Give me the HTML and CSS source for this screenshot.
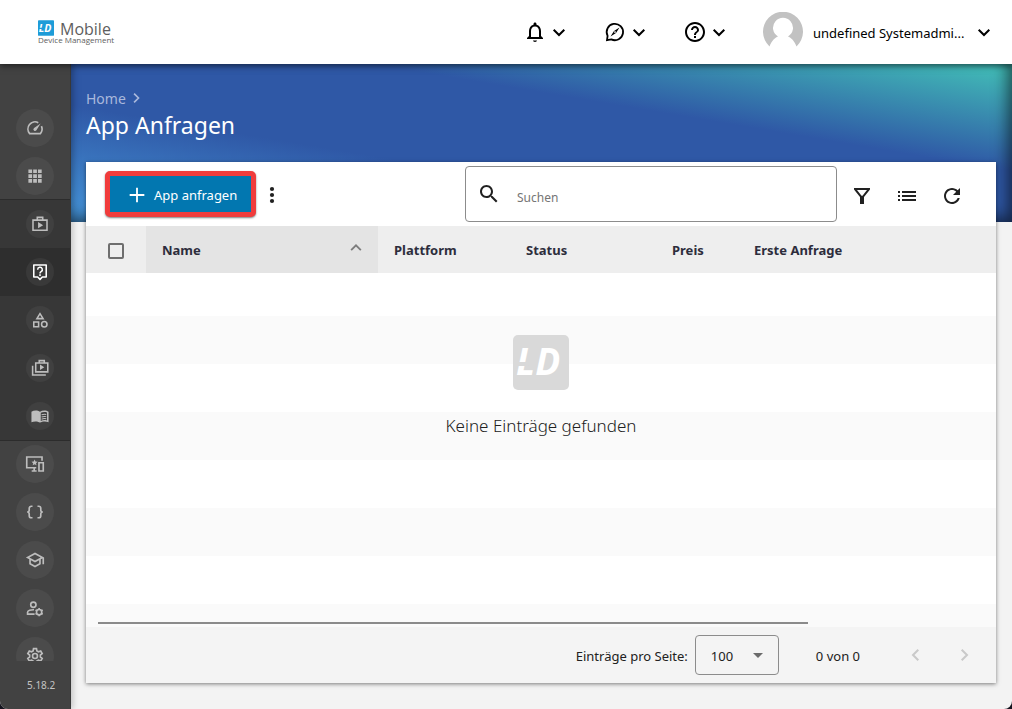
FILE: index.html
```html
<!DOCTYPE html>
<html lang="de">
<head>
<meta charset="utf-8">
<title>App Anfragen</title>
<link rel="stylesheet" href="styles.css">
</head>
<body>
<svg class="sprite" aria-hidden="true">
  <symbol id="chev" viewBox="0 0 24 24"><path d="M6.700 9.700 12 15l5.300-5.300" fill="none" stroke="currentColor" stroke-width="2"/></symbol>
</svg>
<div class="app">
  <header class="topbar">
    <a class="logo" href="#">
      <span class="logo-row"><svg class="logo-mark" viewBox="0 0 56 55"><rect width="56" height="55" rx="3"/><text x="3" y="41" class="ld-text">LD</text><path d="M2 27h14l-1 4H2z"/></svg><span class="logo-name">Mobile</span></span>
      <span class="logo-sub">Device Management</span>
    </a>
    <div class="top-actions">
      <button class="menu" aria-label="Benachrichtigungen">
        <svg class="i24" viewBox="0 0 24 24"><path d="M12 22c1.100 0 2-.9 2-1.500h-4c0 .6.890 1.500 2 1.500zm6-6v-5c0-3.070-1.640-5.640-4.500-6.320V4c0-.83-.67-1.500-1.500-1.500s-1.500.67-1.500 1.500v.68C7.630 5.360 6 7.920 6 11v5l-2 2v1h16v-1l-2-2zm-2 1H8v-6c0-2.480 1.510-4.500 4-4.500s4 2.020 4 4.500v6z"/></svg>
        <svg class="i24"><use href="#chev"/></svg>
      </button>
      <button class="menu" aria-label="Entdecken">
        <svg class="i24" viewBox="0 0 24 24"><path d="M4.600 15.800A8.200 8.200 0 1 1 8.300 19.400L4 20.200z" fill="none" stroke="currentColor" stroke-width="1.800"/><path d="m16.500 7.500-3.500 5.500-5.500 3.500 3.500-5.500zM12 11.200a.8.8 0 1 0 .01 0z" fill-rule="evenodd"/></svg>
        <svg class="i24"><use href="#chev"/></svg>
      </button>
      <button class="menu" aria-label="Hilfe">
        <svg class="i24" viewBox="0 0 24 24"><path d="M11 18h2v-2h-2v2zm1-16C6.480 2 2 6.480 2 12s4.480 10 10 10 10-4.480 10-10S17.520 2 12 2zm0 18c-4.410 0-8-3.590-8-8s3.590-8 8-8 8 3.590 8 8-3.590 8-8 8zm0-14c-2.210 0-4 1.790-4 4h2c0-1.100.9-2 2-2s2 .9 2 2c0 2-3 1.750-3 5h2c0-2.250 3-2.500 3-5 0-2.210-1.790-4-4-4z"/></svg>
        <svg class="i24"><use href="#chev"/></svg>
      </button>
      <button class="user">
        <svg class="avatar" viewBox="0 0 40 40"><path d="M6.500 34.500A20 20 0 1 1 33.500 34.500C31.500 29 28 25.500 25 24.500A10 10 0 1 0 15 24.500C12 25.500 8.500 29 6.500 34.500z"/></svg>
        <span class="user-name">undefined Systemadmi...</span>
        <svg class="i24"><use href="#chev"/></svg>
      </button>
    </div>
  </header>
  <div class="shell">
    <aside class="sidebar">
      <nav class="nav">
        <a class="item" href="#" aria-label="Dashboard"><svg class="dot" viewBox="-11 -11 46 46"><path d="M16 5.600A8.600 8.600 0 0 0 5.500 18.800H18.500A8.600 8.600 0 0 0 19.800 9.800" fill="none" stroke="currentColor" stroke-width="2"/><path d="M18.800 6.700 13.700 14.700a2 2 0 1 1-2.800-2.800z"/></svg></a>
        <a class="item" href="#" aria-label="Apps"><svg class="dot" viewBox="-11 -11 46 46"><path d="M4 4h4.500v4.500H4zM9.800 4h4.500v4.500H9.800zM15.600 4h4.500v4.500h-4.500zM4 9.800h4.500v4.500H4zM9.800 9.800h4.500v4.500H9.800zM15.600 9.800h4.500v4.500h-4.500zM4 15.600h4.500v4.500H4zM9.800 15.600h4.500v4.500H9.800zM15.600 15.600h4.500v4.500h-4.500z"/></svg></a>
        <div class="subnav">
          <a class="item" href="#" aria-label="App Store"><svg class="dot" viewBox="-6 -6 36 36"><g fill="none" stroke="currentColor" stroke-width="2"><path d="M3 7h18v13H3zM8.500 7V3.500h7V7"/></g><path d="M9.500 9.500v8l6.500-4z"/></svg></a>
          <a class="item active" href="#" aria-current="page" aria-label="App Anfragen"><svg class="dot" viewBox="-6 -6 36 36"><path d="M4 3h16v15.500h-5L12 21.500 9 18.500H4z" fill="none" stroke="currentColor" stroke-width="2" stroke-linejoin="round"/><path d="M9 9a3 3 0 1 1 4.500 2.500C12.500 12.200 12 12.500 12 14" fill="none" stroke="currentColor" stroke-width="1.900"/><path d="M11 15h2v2h-2z"/></svg></a>
          <a class="item" href="#" aria-label="Kategorien"><svg class="dot" viewBox="-6 -6 36 36"><g fill="none" stroke="currentColor" stroke-width="2"><path d="M12 3.800 8 10.200h8zM4 14.500h6.200v6.200H4z"/><circle cx="17.500" cy="17.500" r="3.500"/></g></svg></a>
          <a class="item" href="#" aria-label="App-Sammlungen"><svg class="dot" viewBox="-6 -6 36 36"><path d="M6.500 5.500h15.500v11.500H6.500zM11 5.500V2.500h6.500v3M2.500 9v12h17" fill="none" stroke="currentColor" stroke-width="2"/><path d="M12 7.500v7l5.500-3.500z"/></svg></a>
          <a class="item" href="#" aria-label="Katalog"><svg class="dot" viewBox="-6 -6 36 36"><path d="M1 6.500C4 4.500 9 4.500 12 6.500 15 4.500 20 4.500 23 6.500V20c-3-1.500-8-1.500-11 .5C9 18.500 4 18.500 1 20zM13 7.700v10.600c2.500-1.200 5.500-1.300 8-.6V7.400c-2.500-.9-5.500-.8-8 .3z" fill-rule="evenodd"/><path d="M14 10.500q3-1.200 6-.5M14 13.300q3-1.200 6-.5M14 16.100q3-1.200 6-.5" fill="none" stroke="currentColor" stroke-width="1.300"/></svg></a>
        </div>
        <a class="item" href="#" aria-label="Geräte"><svg class="dot" viewBox="-11 -11 46 46"><path d="M20.500 8V3.500H2v13h11.500M8 20.500h6M11 17v3.500M16.800 10.500H22v10h-5.200z" fill="none" stroke="currentColor" stroke-width="2"/><path d="m11.500 6.500 1.100 2.500 2.600.3-2 1.700.6 2.600-2.300-1.400-2.300 1.400.6-2.600-2-1.700 2.600-.3z"/></svg></a>
        <a class="item" href="#" aria-label="Skripte"><svg class="dot" viewBox="-11 -11 46 46"><path d="M9 5H7.500A2.500 2.500 0 0 0 5 7.500v2Q5 12 2.500 12 5 12 5 14.500v2A2.500 2.500 0 0 0 7.500 19H9M15 5h1.500A2.500 2.500 0 0 1 19 7.500v2q0 2.500 2.500 2.500Q19 12 19 14.500v2a2.500 2.500 0 0 1-2.500 2.500H15" fill="none" stroke="currentColor" stroke-width="2"/></svg></a>
        <a class="item" href="#" aria-label="Schule"><svg class="dot" viewBox="-11 -11 46 46"><path d="M12 3 1 9l4 2.180v6L12 21l7-3.820v-6l2-1.090V17h2V9L12 3zm6.820 6L12 12.720 5.180 9 12 5.280 18.820 9zM17 16l-5 2.720L7 16v-3.730L12 15l5-2.730V16z"/></svg></a>
        <a class="item" href="#" aria-label="Benutzerverwaltung"><svg class="dot" viewBox="-11 -11 46 46"><g fill="none" stroke="currentColor" stroke-width="2"><circle cx="10" cy="8" r="3.200"/><path d="M11.500 19.500H3v-2.300C3 15 7 14 10.800 14.100"/><circle cx="17" cy="17" r="3.200"/><path d="M17 12v2M17 20v2M12.700 14.500l1.700 1M19.600 18.500l1.700 1M12.700 19.500l1.700-1M19.600 15.500l1.700-1"/></g></svg></a>
        <a class="item" href="#" aria-label="Einstellungen"><svg class="dot" viewBox="-11 -11 46 46"><path d="M10.200 3h3.600l.5 2.800 1.900 1.100 2.700-1 1.800 3.100-2.200 1.800v2.400l2.200 1.800-1.800 3.100-2.700-1-1.900 1.100-.5 2.800h-3.600l-.5-2.800-1.900-1.100-2.700 1L3.300 15l2.200-1.800v-2.400L3.300 9l1.800-3.100 2.700 1 1.900-1.100z" fill="none" stroke="currentColor" stroke-width="2"/><circle cx="12" cy="12" r="3" fill="none" stroke="currentColor" stroke-width="2"/></svg></a>
      </nav>
      <div class="version">5.18.2</div>
    </aside>
    <main class="main">
      <div class="banner">
        <nav class="crumbs"><a href="#">Home</a><svg class="crumb-sep"><use href="#chev"/></svg></nav>
        <h1>App Anfragen</h1>
      </div>
      <section class="card">
        <div class="toolbar">
          <button class="primary"><svg class="plus" viewBox="0 0 24 24"><path d="M12 4v16M4 12h16" stroke="currentColor" stroke-width="2"/></svg>App anfragen</button>
          <button class="icon-btn more" aria-label="Mehr"><svg class="i24" viewBox="0 0 24 24"><circle cx="12" cy="6" r="2.100"/><circle cx="12" cy="12" r="2.100"/><circle cx="12" cy="18" r="2.100"/></svg></button>
          <label class="search">
            <svg class="i24" viewBox="0 0 24 24"><path d="M15.500 14h-.79l-.28-.27C15.410 12.590 16 11.110 16 9.500 16 5.910 13.090 3 9.500 3S3 5.910 3 9.500 5.910 16 9.500 16c1.610 0 3.090-.59 4.230-1.570l.27.28v.79l5 4.990L20.490 19l-4.990-5zm-6 0C7.010 14 5 11.990 5 9.500S7.010 5 9.500 5 14 7.010 14 9.500 11.990 14 9.500 14z"/></svg>
            <input type="text" placeholder="Suchen" aria-label="Suchen">
          </label>
          <div class="tools">
            <button class="icon-btn" aria-label="Filter"><svg class="i24" viewBox="0 0 24 24"><path d="M4 4h16v1.500L14 13v7h-4v-7L4 5.500zM7 6l4.500 5.700h1L17 6z" fill-rule="evenodd"/></svg></button>
            <button class="icon-btn" aria-label="Liste"><svg class="i24" viewBox="0 0 24 24"><path d="M3 7h2v2H3zM7 7h14v2H7zM3 11h2v2H3zM7 11h14v2H7zM3 15h2v2H3zM7 15h14v2H7z"/></svg></button>
            <button class="icon-btn" aria-label="Aktualisieren"><svg class="i24" viewBox="0 0 24 24"><path d="M17.650 6.350C16.200 4.900 14.210 4 12 4c-4.420 0-7.990 3.580-7.990 8s3.570 8 7.990 8c3.730 0 6.840-2.550 7.730-6h-2.080c-.82 2.330-3.040 4-5.650 4-3.310 0-6-2.690-6-6s2.690-6 6-6c1.660 0 3.140.69 4.220 1.780L13 11h7V4l-2.350 2.350z"/></svg></button>
          </div>
        </div>
        <table class="grid">
          <colgroup><col class="c-check"><col class="c-name"><col class="c-platform"><col class="c-status"><col class="c-price"><col></colgroup>
          <thead><tr>
            <th class="check"><input type="checkbox" aria-label="Alle auswählen"></th>
            <th class="sorted" aria-sort="ascending"><span class="sort">Name<svg class="sort-icon"><use href="#chev"/></svg></span></th>
            <th>Plattform</th><th>Status</th><th>Preis</th><th>Erste Anfrage</th>
          </tr></thead>
        </table>
        <div class="empty">
          <svg class="empty-logo" viewBox="0 0 56 55"><rect width="56" height="55" rx="5"/><text x="3" y="40" class="ld-text">LD</text><path d="M2 27h14l-1 4H2z"/></svg>
          <p>Keine Einträge gefunden</p>
          <div class="scroll-line"></div>
        </div>
        <footer class="pager">
          <label for="size">Einträge pro Seite:</label>
          <span class="select"><select id="size"><option>100</option></select></span>
          <span class="range">0 von 0</span>
          <button class="icon-btn page prev" disabled aria-label="Zurück"><svg class="i24"><use href="#chev"/></svg></button>
          <button class="icon-btn page next" disabled aria-label="Weiter"><svg class="i24"><use href="#chev"/></svg></button>
        </footer>
      </section>
    </main>
  </div>
</div>
</body>
</html>
```
FILE: styles.css
```css
* { box-sizing: border-box; }
body { margin: 0; background: #14141f; font-family: "Noto Sans", sans-serif; font-size: 13px; color: #212121; }
button { border: 0; background: none; padding: 0; font: inherit; color: inherit; }
svg { display: block; fill: currentColor; flex: none; }
a { color: inherit; text-decoration: none; }
.sprite { position: absolute; width: 0; height: 0; }
.i24 { width: 24px; height: 24px; }

.app { height: 100vh; display: flex; flex-direction: column; overflow: hidden; border-radius: 0 0 8px 8px; background: #f3f3f3; }

.topbar { height: 64px; flex: none; display: flex; justify-content: space-between; align-items: center; padding: 0 16px 0 38px; background: #fff; color: #000; box-shadow: 0 2px 6px rgba(0, 0, 0, .5); position: relative; z-index: 3; }
.logo { display: flex; flex-direction: column; color: #5e5e5e; font-family: "Open Sans", sans-serif; }
.logo-row { display: flex; align-items: center; gap: 6px; height: 16px; }
.logo-mark { width: 16px; height: 16px; color: #1e9cd8; }
.logo-name { font-size: 16px; line-height: 16px; padding-top: 2px; }
.logo-sub { font-size: 8px; line-height: 8px; }
.ld-text { font: italic bold 37px "Open Sans", sans-serif; fill: #fff; }
.top-actions { display: flex; align-items: center; }
.menu { display: flex; margin-right: 32px; }
.user { display: flex; align-items: center; }
.avatar { width: 40px; height: 40px; margin-right: 10px; color: #c2c2c2; }
.user-name { width: 159px; padding-top: 2px; text-align: left; white-space: nowrap; }

.shell { flex: 1; min-height: 0; display: flex; }
.sidebar { width: 71px; flex: none; display: flex; flex-direction: column; background: #424242; border-right: 1px solid #383838; box-shadow: 2px 0 6px rgba(0, 0, 0, .2); position: relative; z-index: 2; }
.nav { flex: 1; min-height: 0; overflow: hidden; padding-top: 40px; color: #bdbdbd; }
.item { display: flex; align-items: center; height: 48px; padding-left: 16px; }
.dot { width: 38px; height: 38px; border-radius: 50%; background: #4b4b4b; }
.subnav { background: #373737; border-top: 1px solid #2c2c2c; border-bottom: 1px solid #2c2c2c; margin: -1px 0; }
.subnav .item { padding-left: 26px; }
.subnav .dot { width: 28px; height: 28px; background: #404040; }
.subnav .active { background: #2e2e2e; color: #fff; }
.subnav .active .dot { background: #393939; }
.version { height: 48px; padding: 16px 0 0 27px; font-size: 10px; line-height: 16px; color: #c4c4c4; }

.main { flex: 1; min-width: 0; display: flex; flex-direction: column; }
.banner { height: 158px; flex: none; padding: 25px 15px 0; color: #fff; background: linear-gradient(to top right, #4696da 0%, #2f58a6 37%, #2f58a6 66%, #41b8b6 97%); box-shadow: inset -6px -6px 16px -2px rgba(0, 0, 0, .6); }
.crumbs { display: flex; align-items: center; height: 18px; font-size: 14px; color: #a9b8dc; }
.crumb-sep { width: 20px; height: 20px; transform: rotate(-90deg); }
h1 { margin: 0; font-size: 23px; line-height: 36px; font-weight: 400; }

.card { flex: 1; min-height: 0; display: flex; flex-direction: column; margin: -60px 16px 26px 15px; background: #fff; box-shadow: 0 1px 4px rgba(0, 0, 0, .5); position: relative; z-index: 1; }
.toolbar { height: 64px; flex: none; display: flex; align-items: center; padding: 0 22px 0 19px; }
.primary { display: flex; align-items: center; gap: 6px; width: 151px; height: 46px; padding: 2px 0 0 16px; border: 5px solid #f13c3c; border-radius: 5px; background: #0277b0; color: #fff; font-size: 13px; box-shadow: 0 1px 2px rgba(0, 0, 0, .5); white-space: nowrap; }
.plus { width: 22px; height: 22px; }
.icon-btn { width: 45px; height: 45px; display: grid; place-items: center; }
.more { width: 32px; padding-top: 2px; }
.search { width: 372px; height: 56px; margin-left: auto; display: flex; align-items: center; gap: 16px; padding: 0 11px; border: 1px solid #8c8c8c; border-radius: 4px; }
.search input { flex: 1; min-width: 0; border: 0; outline: 0; padding: 6px 0 0; background: none; font: inherit; font-size: 12px; }
.search input::placeholder { color: #757575; }
.tools { display: flex; margin-left: 2px; padding-top: 4px; }

.grid { width: 100%; table-layout: fixed; border-collapse: collapse; background: #eee; color: #2d2d3c; }
.c-check { width: 60px; }
.c-name { width: 232px; }
.c-platform { width: 132px; }
.c-status { width: 146px; }
.c-price { width: 82px; }
th { height: 47px; padding: 0 16px; text-align: left; font-weight: 700; white-space: nowrap; }
th.check { padding: 0 22px; }
.check input { display: block; appearance: none; width: 16px; height: 16px; margin: 3px 0 0; border: 2px solid #6e6e6e; border-radius: 2px; }
.sorted { background: #e4e4e4; }
.sort { display: flex; justify-content: space-between; align-items: center; }
.sort-icon { width: 22px; height: 22px; margin: 0 -5px 4px 0; color: #7c7c7c; transform: rotate(180deg); }

.empty { flex: 1; min-height: 0; display: flex; flex-direction: column; align-items: center; padding-top: 62px; position: relative; background: repeating-linear-gradient(#fff 0 48px, #fafafa 48px 96px) 0 -5px / 100% 480px; }
.empty-logo { width: 56px; height: 55px; color: #d9d9d9; }
.empty p { margin: 22px 0 0; font-size: 17px; line-height: 28px; font-weight: 300; }
.scroll-line { position: absolute; left: 12px; bottom: 3px; width: 78%; height: 2px; background: #8b8b8b; }

.pager { height: 56px; flex: none; display: flex; align-items: center; justify-content: flex-end; padding-right: 8px; background: #f4f4f4; }
.pager label, .range { padding-top: 2px; }
.select { position: relative; margin: 0 37px 0 7px; }
.select select { display: block; appearance: none; width: 84px; height: 40px; padding: 2px 15px 0; border: 1px solid #8c8c8c; border-radius: 4px; background: transparent; font: inherit; color: inherit; }
.select::after { content: ""; position: absolute; right: 16px; top: 18px; border: 5px solid transparent; border-top-color: #6b6b6b; border-bottom: 0; pointer-events: none; }
.range { margin-right: 32px; }
.page { width: 48px; color: #c9c9c9; }
.prev svg { transform: rotate(90deg); }
.next svg { transform: rotate(-90deg); }
```
